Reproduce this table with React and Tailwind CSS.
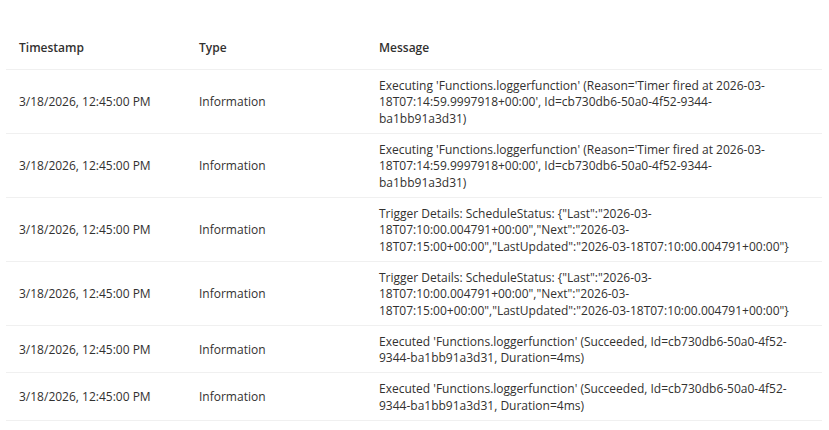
const ROWS = [
  {
    ts: "3/18/2026, 12:45:00 PM",
    type: "Information",
    msg: "Executing 'Functions.loggerfunction' (Reason='Timer fired at 2026-03-18T07:14:59.9997918+00:00', Id=cb730db6-50a0-4f52-9344-ba1bb91a3d31)",
  },
  {
    ts: "3/18/2026, 12:45:00 PM",
    type: "Information",
    msg: "Executing 'Functions.loggerfunction' (Reason='Timer fired at 2026-03-18T07:14:59.9997918+00:00', Id=cb730db6-50a0-4f52-9344-ba1bb91a3d31)",
  },
  {
    ts: "3/18/2026, 12:45:00 PM",
    type: "Information",
    msg: 'Trigger Details: ScheduleStatus: {"Last":"2026-03-18T07:10:00.004791+00:00","Next":"2026-03-18T07:15:00+00:00","LastUpdated":"2026-03-18T07:10:00.004791+00:00"}',
  },
  {
    ts: "3/18/2026, 12:45:00 PM",
    type: "Information",
    msg: 'Trigger Details: ScheduleStatus: {"Last":"2026-03-18T07:10:00.004791+00:00","Next":"2026-03-18T07:15:00+00:00","LastUpdated":"2026-03-18T07:10:00.004791+00:00"}',
  },
  {
    ts: "3/18/2026, 12:45:00 PM",
    type: "Information",
    msg: "Executed 'Functions.loggerfunction' (Succeeded, Id=cb730db6-50a0-4f52-9344-ba1bb91a3d31, Duration=4ms)",
  },
  {
    ts: "3/18/2026, 12:45:00 PM",
    type: "Information",
    msg: "Executed 'Functions.loggerfunction' (Succeeded, Id=cb730db6-50a0-4f52-9344-ba1bb91a3d31, Duration=4ms)",
  },
];

export default function App() {
  return (
    <div className="min-h-screen bg-white font-['Open_Sans',sans-serif] text-[12px] leading-[16.5px] text-[#323130]">
      <div className="pl-[6px] pr-[7px] pt-[25px]">
        <table className="w-full table-fixed border-collapse">
          <colgroup>
            <col className="w-[180px]" />
            <col className="w-[180px]" />
            <col />
          </colgroup>
          <thead>
            <tr className="border-b border-[#f0f0f0]">
              <th className="h-[44px] px-[13px] pt-[2px] text-left font-semibold">Timestamp</th>
              <th className="h-[44px] px-[13px] pt-[2px] text-left font-semibold">Type</th>
              <th className="h-[44px] px-[13px] pt-[2px] text-left font-semibold">Message</th>
            </tr>
          </thead>
          <tbody>
            {ROWS.map((r, i) => (
              <tr key={i} className="border-b border-[#f0f0f0]">
                <td className="px-[13px] pt-[8px] pb-[5.5px] align-middle">{r.ts}</td>
                <td className="px-[13px] pt-[8px] pb-[5.5px] align-middle">{r.type}</td>
                <td className="pt-[8px] pb-[5.5px] pl-[13px] pr-[30px] align-middle break-words">{r.msg}</td>
              </tr>
            ))}
          </tbody>
        </table>
      </div>
    </div>
  );
}
